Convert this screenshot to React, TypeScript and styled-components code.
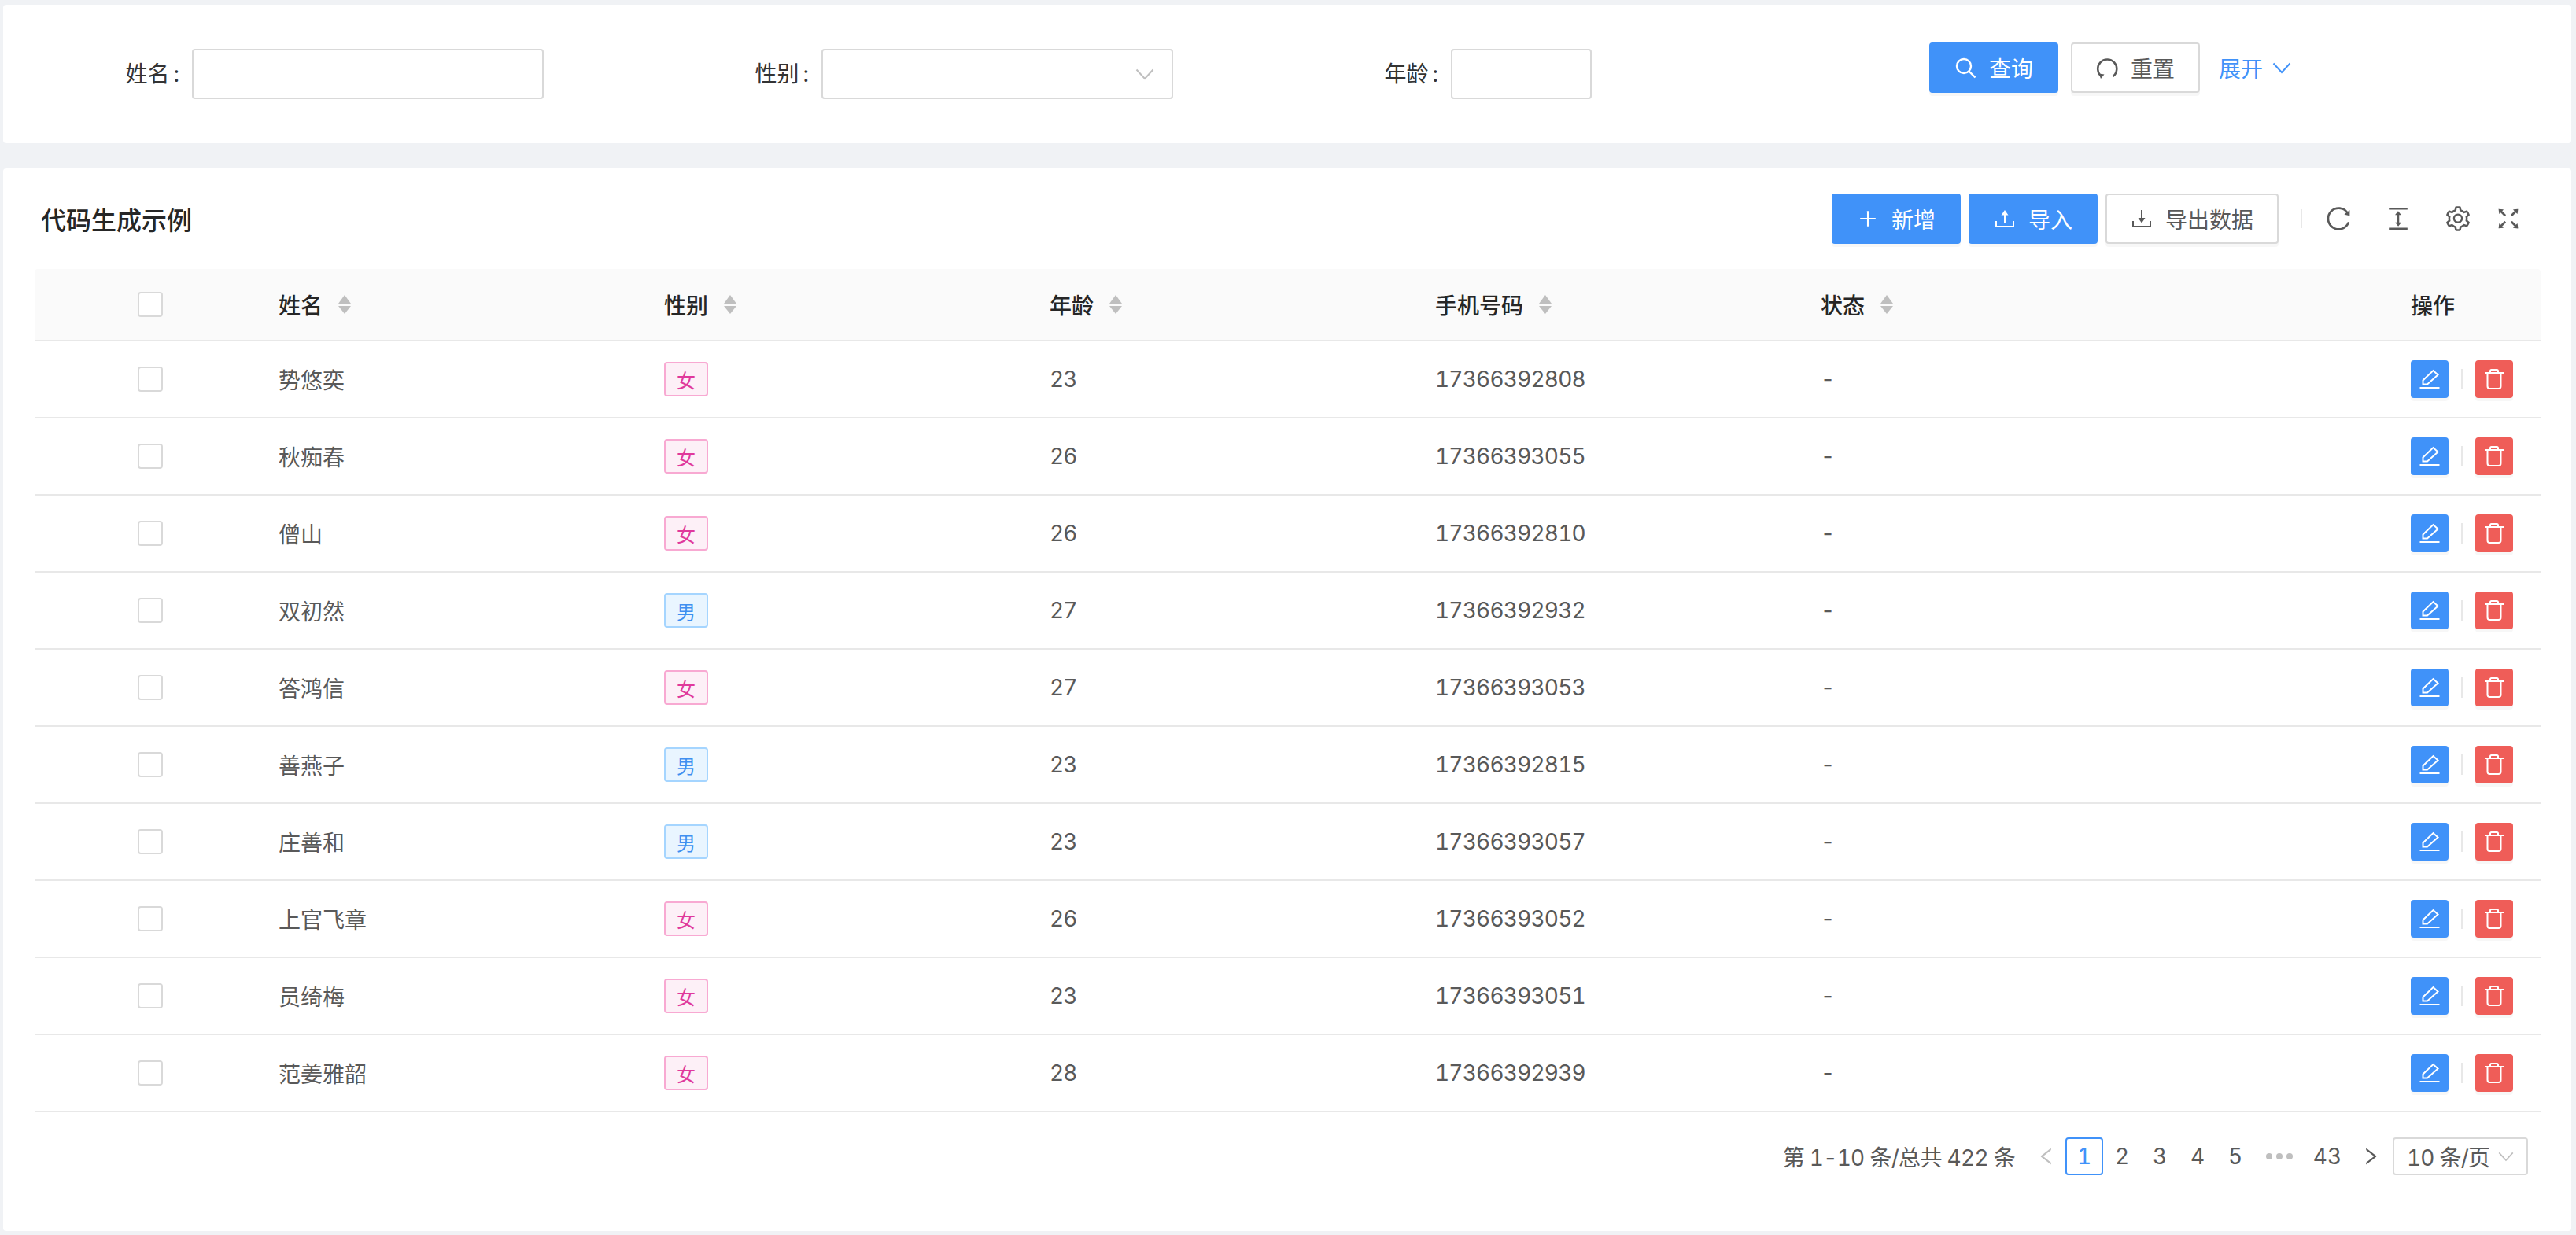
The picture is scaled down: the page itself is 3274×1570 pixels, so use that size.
import React from "react";
import styled, { createGlobalStyle } from "styled-components";
import {
  AiOutlineColumnHeight,
  AiOutlineFullscreen,
  AiOutlineLeft,
  AiOutlinePlus,
  AiOutlineReload,
  AiOutlineRight,
  AiOutlineSetting,
} from "react-icons/ai";

const PRIMARY = "#4092f9";
const RED = "#ef5d58";
const LINE = "#d9d9d9";

const GlobalStyle = createGlobalStyle`
  html, body {
    margin: 0;
    padding: 0;
    background: #f0f2f5;
  }
  body {
    font-family: Inter, "Noto Sans CJK SC", sans-serif;
    font-size: 28px;
    font-variant-numeric: tabular-nums;
    color: #595959;
    -webkit-font-smoothing: antialiased;
  }
  * {
    box-sizing: border-box;
  }
`;

const Page = styled.div`
  display: flex;
  flex-direction: column;
  gap: 32px;
  height: 1570px;
  padding: 6px 6px 5px 4px;
  overflow: hidden;
`;

const Card = styled.section`
  background: #fff;
  border-radius: 4px;
`;

const SearchCard = styled(Card)`
  display: flex;
  align-items: flex-start;
  height: 176px;
  padding-top: 48px;
`;

const Field = styled.div`
  display: flex;
  align-items: center;
  width: 800px;
  margin-top: 8px;
`;

const Label = styled.label`
  width: 240px;
  padding-right: 16px;
  text-align: right;
  color: #333;
  line-height: 64px;
`;

const Colon = styled.span`
  margin-left: 5px;
`;

const TextInput = styled.input<{ $width: number }>`
  width: ${(p) => p.$width}px;
  height: 64px;
  border: 2px solid ${LINE};
  border-radius: 4px;
  background: #fff;
  outline: none;
`;

const SelectBox = styled.div<{ $width: number }>`
  display: flex;
  align-items: center;
  justify-content: space-between;
  width: ${(p) => p.$width}px;
  height: 64px;
  padding: 0 22px;
  border: 2px solid ${LINE};
  border-radius: 4px;
  background: #fff;
`;

const Actions = styled.div`
  display: flex;
  align-items: center;
  gap: 16px;
  margin-left: 48px;
`;

const Button = styled.button<{ $primary?: boolean }>`
  display: inline-flex;
  align-items: center;
  justify-content: center;
  gap: 16px;
  height: 64px;
  padding: 0 30px;
  border: 2px solid ${(p) => (p.$primary ? PRIMARY : LINE)};
  border-radius: 4px;
  background: ${(p) => (p.$primary ? PRIMARY : "#fff")};
  color: ${(p) => (p.$primary ? "#fff" : "#595959")};
  font: inherit;
  box-shadow: 0 4px 0 rgba(0, 0, 0, 0.03);
  svg {
    font-size: 28px;
  }
`;

const ExpandLink = styled.a`
  display: inline-flex;
  align-items: center;
  gap: 12px;
  margin-left: 8px;
  color: ${PRIMARY};
`;

const TableCard = styled(Card)`
  flex: 1;
  padding: 32px 39px 0 40px;
`;

const TitleBar = styled.header`
  display: flex;
  align-items: center;
  justify-content: space-between;
  height: 64px;
  margin-bottom: 32px;
`;

const Title = styled.h2`
  margin: 0 0 0 8px;
  color: #262626;
  font-size: 32px;
  font-weight: 500;
`;

const Toolbar = styled.div`
  display: flex;
  align-items: center;
  gap: 10px;
  margin-right: 23px;
`;

const VerticalRule = styled.i<{ $h: number; $mx: number }>`
  display: block;
  width: 2px;
  height: ${(p) => p.$h}px;
  margin: 0 ${(p) => p.$mx}px;
  background: #e8e8e8;
`;

const IconTools = styled.div`
  display: flex;
  align-items: center;
  gap: 40px;
  color: #595959;
  svg {
    display: block;
    font-size: 36px;
  }
  svg:last-child {
    margin-left: -12px;
  }
`;

const Table = styled.table`
  width: 100%;
  table-layout: fixed;
  border-collapse: separate;
  border-spacing: 0;
`;

const HeadCell = styled.th<{ $width?: number }>`
  width: ${(p) => (p.$width ? `${p.$width}px` : "auto")};
  height: 92px;
  padding: 0 16px;
  border-bottom: 2px solid #e8e8e8;
  background: #fafafa;
  color: #262626;
  font-weight: 500;
  text-align: left;
  &:first-child {
    border-top-left-radius: 4px;
    text-align: center;
  }
  &:last-child {
    border-top-right-radius: 4px;
  }
`;

const HeadLabel = styled.span`
  display: inline-flex;
  align-items: center;
  gap: 20px;
`;

const Cell = styled.td<{ $num?: boolean }>`
  height: 98px;
  padding: 0 16px;
  border-bottom: 2px solid #e8e8e8;
  color: #595959;
  letter-spacing: ${(p) => (p.$num ? "-0.8px" : "normal")};
  &:first-child {
    text-align: center;
  }
`;

const Check = styled.input.attrs({ type: "checkbox" })`
  display: block;
  width: 32px;
  height: 32px;
  margin: 0 auto;
  border: 2px solid ${LINE};
  border-radius: 4px;
  background: #fff;
  appearance: none;
`;

const GenderTag = styled.span<{ $male: boolean }>`
  display: inline-flex;
  align-items: center;
  justify-content: center;
  width: 56px;
  height: 44px;
  border: 2px solid ${(p) => (p.$male ? "#a5d5ff" : "#f8a9d2")};
  border-radius: 4px;
  background: ${(p) => (p.$male ? "#e9f5ff" : "#fdf0f7")};
  color: ${(p) => (p.$male ? "#3f8ff0" : "#e0399c")};
  font-size: 24px;
`;

const RowActions = styled.div`
  display: flex;
  align-items: center;
`;

const SquareButton = styled.button<{ $danger?: boolean }>`
  display: flex;
  align-items: center;
  justify-content: center;
  width: 48px;
  height: 48px;
  padding: 0;
  border: none;
  border-radius: 4px;
  background: ${(p) => (p.$danger ? RED : PRIMARY)};
  box-shadow: 0 4px 0 rgba(0, 0, 0, 0.03);
`;

const Pager = styled.nav`
  display: flex;
  align-items: center;
  justify-content: flex-end;
  height: 48px;
  margin: 32px 16px 0 0;
`;

const PagerTotal = styled.span`
  margin-right: 24px;
  letter-spacing: -0.7px;
`;

const PageItem = styled.span<{ $active?: boolean; $w?: number; $trail?: number }>`
  display: flex;
  align-items: center;
  justify-content: center;
  width: ${(p) => p.$w ?? 48}px;
  height: 48px;
  padding-right: ${(p) => p.$trail ?? 0}px;
  border: 2px solid ${(p) => (p.$active ? PRIMARY : "transparent")};
  border-radius: 4px;
  color: ${(p) => (p.$active ? PRIMARY : "#595959")};
`;

const PageArrow = styled.span<{ $off?: boolean }>`
  display: flex;
  align-items: center;
  justify-content: center;
  width: 40px;
  height: 48px;
  padding-right: ${(p) => (p.$off ? 8 : 0)}px;
  color: ${(p) => (p.$off ? "#bfbfbf" : "#595959")};
  font-size: 28px;
`;

const Dots = styled.span`
  display: flex;
  gap: 5px;
  i {
    width: 8px;
    height: 8px;
    border-radius: 50%;
    background: #bfbfbf;
  }
`;

const PageSize = styled.div`
  display: flex;
  align-items: center;
  justify-content: space-between;
  width: 172px;
  height: 48px;
  margin-left: 8px;
  padding: 0 16px;
  border: 2px solid ${LINE};
  border-radius: 4px;
  letter-spacing: -0.8px;
  white-space: nowrap;
`;

function Chevron({ color, size = 24 }: { color: string; size?: number }) {
  return (
    <svg width={size} height={size} viewBox="0 0 24 24" fill="none">
      <path d="M1.5 6.5 12 18 22.5 6.5" stroke={color} strokeWidth="2" />
    </svg>
  );
}

function SortIcon() {
  return (
    <svg width="16" height="24" viewBox="0 0 16 24" fill="#bfbfbf">
      <polygon points="8,0 16,11 0,11" />
      <polygon points="0,14 16,14 8,24" />
    </svg>
  );
}

function SearchIcon() {
  return (
    <svg width="28" height="28" viewBox="0 0 28 28" fill="none" stroke="#fff" strokeWidth="2.4">
      <circle cx="12" cy="12" r="9" />
      <path d="M18.5 18.5 26.5 26.5" />
    </svg>
  );
}

function ResetIcon() {
  return (
    <svg width="28" height="28" viewBox="0 0 28 28" fill="none">
      <path
        d="M7 25 A12 12 0 1 1 21.5 25"
        stroke="#595959"
        strokeWidth="2.6"
      />
      <polygon points="3.5,21.5 10.5,22.5 6,28" fill="#595959" />
    </svg>
  );
}

function UploadIcon() {
  return (
    <svg width="28" height="28" viewBox="0 0 28 28" fill="none" stroke="#fff" strokeWidth="2">
      <path d="M3 17V24H25V17" />
      <path d="M14 6V19" />
      <polygon points="14,3 9.5,9.5 18.5,9.5" fill="#fff" stroke="none" />
    </svg>
  );
}

function DownloadIcon() {
  return (
    <svg width="28" height="28" viewBox="0 0 28 28" fill="none" stroke="#595959" strokeWidth="2">
      <path d="M3 17V24H25V17" />
      <path d="M14 3V16" />
      <polygon points="14,19.5 9.5,13 18.5,13" fill="#595959" stroke="none" />
    </svg>
  );
}

function EditIcon() {
  return (
    <svg width="28" height="28" viewBox="0 0 28 28" fill="none" stroke="#fff" strokeWidth="2">
      <path d="M5.5 20.5V15.5L18.5 3 24.5 8.5 11 20.5Z" />
      <path d="M1.5 25H26.5" />
    </svg>
  );
}

function TrashIcon() {
  return (
    <svg width="28" height="28" viewBox="0 0 28 28" fill="none" stroke="#fff" strokeWidth="2">
      <path d="M2 6H26" />
      <path d="M9 6V3.5Q9 2 10.5 2H17.5Q19 2 19 3.5V6" />
      <path d="M5.5 6V23Q5.5 26 8.5 26H19.5Q22.5 26 22.5 23V6" />
    </svg>
  );
}

const columns = ["姓名", "性别", "年龄", "手机号码", "状态"];

const rows = [
  { name: "势悠奕", male: false, age: 23, phone: "17366392808" },
  { name: "秋痴春", male: false, age: 26, phone: "17366393055" },
  { name: "僧山", male: false, age: 26, phone: "17366392810" },
  { name: "双初然", male: true, age: 27, phone: "17366392932" },
  { name: "答鸿信", male: false, age: 27, phone: "17366393053" },
  { name: "善燕子", male: true, age: 23, phone: "17366392815" },
  { name: "庄善和", male: true, age: 23, phone: "17366393057" },
  { name: "上官飞章", male: false, age: 26, phone: "17366393052" },
  { name: "员绮梅", male: false, age: 23, phone: "17366393051" },
  { name: "范姜雅韶", male: false, age: 28, phone: "17366392939" },
];

export default function App() {
  return (
    <Page>
      <GlobalStyle />
      <SearchCard>
        <Field>
          <Label>
            姓名<Colon>:</Colon>
          </Label>
          <TextInput $width={447} />
        </Field>
        <Field>
          <Label>
            性别<Colon>:</Colon>
          </Label>
          <SelectBox $width={447}>
            <span />
            <Chevron color="#bfbfbf" />
          </SelectBox>
        </Field>
        <Field>
          <Label>
            年龄<Colon>:</Colon>
          </Label>
          <TextInput $width={179} />
        </Field>
        <Actions>
          <Button $primary>
            <SearchIcon />
            查询
          </Button>
          <Button>
            <ResetIcon />
            重置
          </Button>
          <ExpandLink>
            展开
            <Chevron color={PRIMARY} />
          </ExpandLink>
        </Actions>
      </SearchCard>

      <TableCard>
        <TitleBar>
          <Title>代码生成示例</Title>
          <Toolbar>
            <Button $primary>
              <AiOutlinePlus />
              新增
            </Button>
            <Button $primary>
              <UploadIcon />
              导入
            </Button>
            <Button>
              <DownloadIcon />
              导出数据
            </Button>
            <VerticalRule $h={24} $mx={18} />
            <IconTools>
              <AiOutlineReload />
              <AiOutlineColumnHeight />
              <AiOutlineSetting />
              <AiOutlineFullscreen />
            </IconTools>
          </Toolbar>
        </TitleBar>

        <Table>
          <thead>
            <tr>
              <HeadCell $width={294}>
                <Check />
              </HeadCell>
              {columns.map((c, i) => (
                <HeadCell key={c} $width={i < 4 ? 490 : undefined}>
                  <HeadLabel>
                    {c}
                    <SortIcon />
                  </HeadLabel>
                </HeadCell>
              ))}
              <HeadCell $width={181}>操作</HeadCell>
            </tr>
          </thead>
          <tbody>
            {rows.map((r) => (
              <tr key={r.phone}>
                <Cell>
                  <Check />
                </Cell>
                <Cell>{r.name}</Cell>
                <Cell>
                  <GenderTag $male={r.male}>{r.male ? "男" : "女"}</GenderTag>
                </Cell>
                <Cell $num>{r.age}</Cell>
                <Cell $num>{r.phone}</Cell>
                <Cell>-</Cell>
                <Cell>
                  <RowActions>
                    <SquareButton>
                      <EditIcon />
                    </SquareButton>
                    <VerticalRule $h={26} $mx={16} />
                    <SquareButton $danger>
                      <TrashIcon />
                    </SquareButton>
                  </RowActions>
                </Cell>
              </tr>
            ))}
          </tbody>
        </Table>

        <Pager>
          <PagerTotal>第 1-10 条/总共 422 条</PagerTotal>
          <PageArrow $off>
            <AiOutlineLeft />
          </PageArrow>
          <PageItem $active>1</PageItem>
          <PageItem>2</PageItem>
          <PageItem>3</PageItem>
          <PageItem>4</PageItem>
          <PageItem>5</PageItem>
          <PageItem $w={64}>
            <Dots>
              <i />
              <i />
              <i />
            </Dots>
          </PageItem>
          <PageItem $w={64} $trail={6}>
            43
          </PageItem>
          <PageArrow>
            <AiOutlineRight />
          </PageArrow>
          <PageSize>
            10 条/页
            <Chevron color="#bfbfbf" size={20} />
          </PageSize>
        </Pager>
      </TableCard>
    </Page>
  );
}
